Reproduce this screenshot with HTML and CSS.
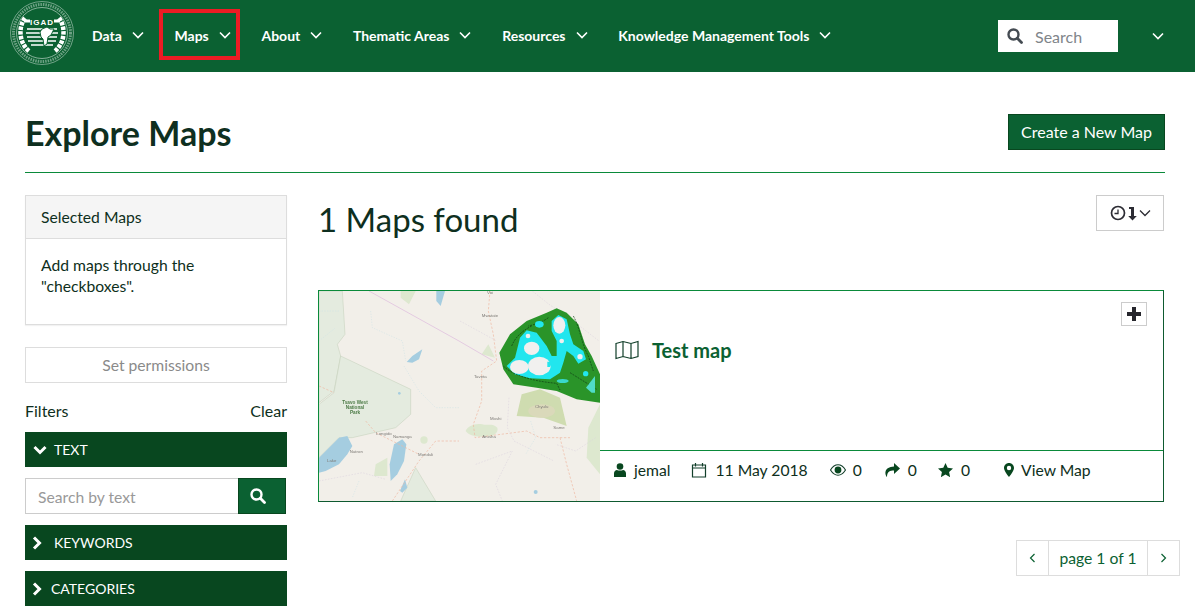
FILE: index.html
```html
<!DOCTYPE html>
<html lang="en">
<head>
    <meta charset="UTF-8">
    <meta name="viewport" content="width=device-width, initial-scale=1.0">
    <title>Explore Maps</title>
    <link rel="stylesheet" href="styles.css">
</head>
<body>
    <header class="topbar">
        <a class="logo" href="#">
            <svg width="64" height="64" viewBox="0 0 64 64" fill="none" stroke="#e6efe9">
                <circle cx="32" cy="32" r="31.500" stroke-width=".8" opacity=".6"/>
                <circle cx="32" cy="32" r="28.500" stroke-width="3" stroke-dasharray="1.500 1" opacity=".45"/>
                <circle cx="32" cy="32" r="25.500" stroke-width=".8" opacity=".7"/>
                <path d="M15 17C8 26 9 42 19 50M49 17c7 9 6 25-4 33" stroke="#fff" stroke-width="4.500" stroke-dasharray="3.500 1.200"/>
                <path d="M17 28h30M16 32h32M17 36h30M18 40h28M21 44h22" stroke="#fff" stroke-width="1.300"/>
                <path d="M14 20h6M44 20h6" stroke="#fff" stroke-width="3"/>
                <path d="M32 28l5-2 3 2h4l-3 6-3 2-1 7-3 2-1-7-2-2-1-5z" fill="#fff" stroke="#0b6132" stroke-width="1"/>
                <text class="logo-text" x="32" y="23.500" text-anchor="middle">IGAD</text>
            </svg>
        </a>
        <nav class="mainnav">
            <a class="navitem" href="#">Data <svg class="caret" viewBox="0 0 12 8"><path d="M1 1.500l5 5 5-5"/></svg></a>
            <a class="navitem navitem-marked" href="#">Maps <svg class="caret" viewBox="0 0 12 8"><path d="M1 1.500l5 5 5-5"/></svg></a>
            <a class="navitem" href="#">About <svg class="caret" viewBox="0 0 12 8"><path d="M1 1.500l5 5 5-5"/></svg></a>
            <a class="navitem" href="#">Thematic Areas <svg class="caret" viewBox="0 0 12 8"><path d="M1 1.500l5 5 5-5"/></svg></a>
            <a class="navitem" href="#">Resources <svg class="caret" viewBox="0 0 12 8"><path d="M1 1.500l5 5 5-5"/></svg></a>
            <a class="navitem" href="#">Knowledge Management Tools <svg class="caret" viewBox="0 0 12 8"><path d="M1 1.500l5 5 5-5"/></svg></a>
        </nav>
        <div class="topsearch">
            <svg class="searchicon" width="16" height="16" viewBox="0 0 16 16"><circle cx="6.500" cy="6.500" r="5" fill="none" stroke="currentColor" stroke-width="2.400"/><path d="M10.300 10.300l4.200 4.200" stroke="currentColor" stroke-width="2.800" stroke-linecap="round"/></svg>
            <span>Search</span>
        </div>
        <svg class="caret caret-last" viewBox="0 0 12 8"><path d="M1 1.500l5 5 5-5"/></svg>
    </header>

    <main class="page">
        <div class="titlerow">
            <h1>Explore Maps</h1>
            <a class="btn-create" href="#">Create a New Map</a>
        </div>

        <div class="columns">
            <aside class="sidebar">
                <div class="panel">
                    <div class="panel-head">Selected Maps</div>
                    <div class="panel-body">Add maps through the "checkboxes".</div>
                </div>
                <button class="btn-perm" type="button">Set permissions</button>
                <div class="filters-row">
                    <span>Filters</span>
                    <a href="#">Clear</a>
                </div>
                <div class="filterbar filterbar-text">
                    <svg class="fchev" width="14" height="10" viewBox="0 0 14 10"><path d="M1.500 2l5.500 5.500L12.500 2"/></svg>
                    TEXT
                </div>
                <div class="textsearch">
                    <div class="textsearch-input">Search by text</div>
                    <div class="textsearch-btn">
                        <svg width="16" height="16" viewBox="0 0 16 16"><circle cx="6.500" cy="6.500" r="5" fill="none" stroke="#fff" stroke-width="2.400"/><path d="M10.300 10.300l4.200 4.200" stroke="#fff" stroke-width="2.800" stroke-linecap="round"/></svg>
                    </div>
                </div>
                <div class="filterbar filterbar-kw">
                    <svg class="fchev" width="10" height="14" viewBox="0 0 10 14"><path d="M2 1.500L7.500 7 2 12.500"/></svg>
                    KEYWORDS
                </div>
                <div class="filterbar filterbar-cat">
                    <svg class="fchev" width="10" height="14" viewBox="0 0 10 14"><path d="M2 1.500L7.500 7 2 12.500"/></svg>
                    CATEGORIES
                </div>
            </aside>

            <section class="results">
                <div class="results-head">
                    <h2>1 Maps found</h2>
                    <button class="btn-sort" type="button">
                        <svg width="16" height="16" viewBox="0 0 16 16" fill="none" stroke="#2c2c34"><circle cx="8" cy="8" r="6.500" stroke-width="1.700"/><path d="M8 4.500V8.500H4.500" stroke-width="1.300"/></svg>
                        <svg width="9" height="15" viewBox="0 0 9 15"><path d="M1 1h5v9h2.800L4.500 14.500 .2 10H3V3H1z" fill="#2c2c34"/></svg>
                        <svg width="12" height="8" viewBox="0 0 12 8" fill="none" stroke="#2c2c34" stroke-width="1.300"><path d="M1 1.500l5 5 5-5"/></svg>
                    </button>
                </div>

                <article class="card">
                    <svg class="thumb" width="281" height="210" viewBox="0 0 843 630">
                        <g class="thumb-tiles">
                            <rect width="843" height="630" fill="#f2efe9"/>
                            <g fill="#e4ebdf" stroke="#c3cfb8" stroke-width="1.500">
                                <path d="M0 0h70l8 130-23 30 10 35-20 105-45 35z"/>
                                <path d="M65 195l210 100v75l-45 40-65 15-65 15H60L0 500V340l45-35z"/>
                                <path d="M245 630l45-100 60 100z"/>
                            </g>
                            <g fill="#dde8cf">
                                <path d="M245 0h45l-20 40-25-20zM165 555l5-35 35-20v55z"/>
                                <ellipse cx="315" cy="447" rx="11" ry="11"/>
                                <path d="M488 190l20-30 20 40zM440 420c5-15 30-25 50-20 15 5 30-5 45 10 5 15-15 30-35 25-20 5-50 0-60-15z"/>
                                <path d="M803 500l5-90 35-70v210z"/>
                            </g>
                            <path d="M593 375l15-65 55-15 60 25 20 85-70-25z" fill="#cfdcb0"/>
                            <ellipse cx="668" cy="360" rx="40" ry="20" fill="#dad9ba"/>
                            <g fill="#a5cde0">
                                <path d="M0 545v-45l60-60 25-5 15 30-15 25-25 30-40 20z"/>
                                <path d="M215 570l-3-50 13-60 25-15 12 15-7 50-20 40z"/>
                                <path d="M263 213l17-18 30-20-10 30-20 10z"/>
                                <path d="M352 0h26l-13 45-13-15z"/>
                                <path d="M243 600l15-35 7 25-15 15z"/>
                                <circle cx="650" cy="603" r="6"/>
                                <circle cx="241" cy="307" r="4"/>
                            </g>
                            <path d="M150 0l270 150 103 60" stroke="#dcb8dc" stroke-width="2" fill="none"/>
                            <g fill="none" stroke="#eeb6a0" stroke-width="2" stroke-dasharray="7 5">
                                <path d="M513 0l-5 60 15 70 10 80-45 30v90l-25 70 5 40 155-20 40 20h90"/>
                                <path d="M723 440l20 80 30 110M220 630l80-120 50-60h70"/>
                                <path d="M0 285l45 20M140 390l30 35 130 65"/>
                            </g>
                            <g fill="none" stroke="#d8cfdc" stroke-width="1.500" stroke-dasharray="5 4">
                                <path d="M570 320l-5 90 20 40 60 30 60 30M470 520l110-40-50 100 20 50M0 570l130-25 70 20M830 440l-60 40-60-20"/>
                                <path d="M423 90l110 60M640 0l50 40 60 40 90 70"/>
                            </g>
                            <g fill="none" stroke="#cbe0e4" stroke-width="1.500" stroke-dasharray="4 4">
                                <path d="M0 60h60M0 150l50-40M155 60l5 50 90 40 10 60M255 225l45 75 50 50 70 0M120 570l-20 50M635 390l15 50-30 50"/>
                            </g>
                            <g class="maplabel-park">
                                <text x="108" y="340" text-anchor="middle">Tsavo West</text>
                                <text x="108" y="354" text-anchor="middle">National</text>
                                <text x="108" y="368" text-anchor="middle">Park</text>
                            </g>
                            <g class="maplabel">
                                <text x="513" y="10" text-anchor="middle">Voi</text>
                                <text x="513" y="78" text-anchor="middle">Mwatate</text>
                                <text x="484" y="260" text-anchor="middle">Taveta</text>
                                <text x="530" y="388" text-anchor="middle">Moshi</text>
                                <text x="510" y="440" text-anchor="middle">Arusha</text>
                                <text x="668" y="352" text-anchor="middle">Chyulu</text>
                                <text x="720" y="415" text-anchor="middle">Same</text>
                                <text x="195" y="432" text-anchor="middle">Longido</text>
                                <text x="250" y="442" text-anchor="middle">Namanga</text>
                                <text x="320" y="494" text-anchor="middle">Monduli</text>
                                <text x="112" y="486" text-anchor="middle">Natron</text>
                                <text x="38" y="512" text-anchor="middle">Lake</text>
                            </g>
                        </g>
                        <g class="thumb-layer" transform="translate(423 0)">
                            <path d="M118 185L150 130 200 90 260 65 290 52 320 65 355 100 375 160 395 195 420 250V335L350 325 290 300 230 290 160 280 130 235Z" fill="#2a9429"/>
                            <path d="M140 225L165 200 180 140 200 118 230 125 260 165 275 195 290 195 290 150 275 120 275 90 295 72 320 85 330 130 340 160 370 180 378 205 355 218 340 195 320 180 310 215 300 245 270 265 210 262 165 250Z" fill="#22e6ee"/>
                            <path d="M130 225c25 25 80 45 160 52l10 20M155 165c10-25 30-45 60-60M265 80c-20 15-40 20-60 25M340 75c20 35 25 85 45 120l15 45M330 245l80 50" stroke="#0d3a14" stroke-width="2" stroke-dasharray="6 3" fill="none"/>
                            <path d="M378 290l27-35v50h-10z" fill="#4fdcc8"/>
                            <ellipse cx="238" cy="100" rx="13" ry="10" fill="#22e6ee"/>
                            <circle cx="377" cy="248" r="8" fill="#22e6ee"/>
                            <ellipse cx="308" cy="270" rx="18" ry="6" fill="#3ad8cc"/>
                            <g fill="#f1f0ef">
                                <ellipse cx="298" cy="103" rx="18" ry="25"/>
                                <ellipse cx="215" cy="172" rx="23" ry="20"/>
                                <ellipse cx="178" cy="228" rx="28" ry="21"/>
                                <ellipse cx="238" cy="225" rx="34" ry="28"/>
                                <circle cx="305" cy="150" r="7"/>
                                <circle cx="360" cy="197" r="8"/>
                                <circle cx="204" cy="135" r="7"/>
                            </g>
                            <path d="M262 212h16l-8 16h-8z" fill="#22e6ee"/>
                        </g>
                    </svg>
                    <div class="card-main">
                        <div class="card-body">
                            <button class="btn-add" type="button" aria-label="Add">
                                <svg width="16" height="16" viewBox="0 0 16 16"><path d="M6 1h4v5h5v4h-5v5H6v-5H1V6h5z" fill="#26262c"/></svg>
                            </button>
                            <h3>
                                <svg width="24" height="20" viewBox="0 0 24 20" fill="none" stroke="#123f2a" stroke-width="1.200"><path d="M1 3.500l7-2 8 2 7-2v15l-7 2-8-2-7 2zM8 1.500v15M16 3.500v15"/></svg>
                                <a href="#">Test map</a>
                            </h3>
                        </div>
                        <div class="card-foot">
                            <span class="meta meta-user">
                                <svg class="solid" width="12" height="14" viewBox="0 0 12 14"><circle cx="6" cy="3.500" r="3.300"/><path d="M0 14v-3.500C0 8.500 1.500 7 3 7c1 .8 5 .8 6 0 1.500 0 3 1.500 3 3.500V14z"/></svg>
                                jemal
                            </span>
                            <span class="meta meta-date">
                                <svg width="16" height="16" viewBox="0 0 16 16" fill="none" stroke="#123f2a" stroke-width="1.200"><path d="M1.500 3h13v12h-13zM1.500 6h13M4.500 1v3.500M11.500 1v3.500"/></svg>
                                11 May 2018
                            </span>
                            <span class="meta meta-views">
                                <svg width="16" height="12" viewBox="0 0 16 12"><path d="M.5 6C3 2 5.500 .8 8 .8S13 2 15.500 6C13 10 10.500 11.200 8 11.200S3 10 .5 6z" fill="none" stroke="#123f2a" stroke-width="1.100"/><circle cx="8" cy="6" r="3.400" fill="#08471f"/></svg>
                                0
                            </span>
                            <span class="meta meta-share">
                                <svg class="solid" width="16" height="14" viewBox="0 0 16 14"><path d="M10 0l6 5.500-6 5.500V7.500C6 7.500 3 8.500 3 14 .5 11 0 4 10 3.500z"/></svg>
                                0
                            </span>
                            <span class="meta meta-star">
                                <svg class="solid" width="15" height="14" viewBox="0 0 15 14"><path d="M7.500 0l2.200 4.800 5.300.6-3.900 3.600 1 5.200-4.600-2.600-4.600 2.600 1-5.200L0 5.400l5.300-.6z"/></svg>
                                0
                            </span>
                            <a class="meta meta-view" href="#">
                                <svg class="solid" width="10" height="14" viewBox="0 0 10 14"><path fill-rule="evenodd" d="M5 0c2.800 0 5 2.200 5 5 0 2.500-3 6.500-5 9-2-2.500-5-6.500-5-9 0-2.800 2.200-5 5-5zm0 2.800a2.200 2.200 0 100 4.400 2.200 2.200 0 000-4.400z"/></svg>
                                View Map
                            </a>
                        </div>
                    </div>
                </article>

                <div class="pager">
                    <a href="#"><svg width="7" height="10" viewBox="0 0 7 10" fill="none" stroke="#0b6132" stroke-width="1.200"><path d="M5.500 1L1.500 5l4 4"/></svg></a>
                    <span>page 1 of 1</span>
                    <a href="#"><svg width="7" height="10" viewBox="0 0 7 10" fill="none" stroke="#0b6132" stroke-width="1.200"><path d="M1.500 1l4 4-4 4"/></svg></a>
                </div>
            </section>
        </div>
    </main>
</body>
</html>
```

FILE: styles.css
```css
html, body {
    height: 100%;
    overflow: hidden;
}
body {
    margin: 0;
    font-family: Lato, "Open Sans", sans-serif;
    font-size: 16px;
    color: #0e2f20;
    background-color: #fff;
}
a {
    color: inherit;
    text-decoration: none;
}
button {
    font-family: inherit;
}

/* top bar */
.topbar {
    display: flex;
    align-items: center;
    height: 72px;
    background-color: #0b6132;
    color: #fff;
}
.logo {
    display: flex;
    margin: -6px 0 0 10px;
}
.logo-text {
    font-family: "Liberation Sans", sans-serif;
    font-size: 8px;
    font-weight: bold;
    letter-spacing: 1px;
    fill: #fff;
    stroke: none;
}
.mainnav {
    display: flex;
    align-items: center;
    margin: -2px 0 0 18px;
}
.navitem {
    position: relative;
    display: flex;
    align-items: center;
    gap: 10px;
    margin-right: 30.700px;
    font-size: 14px;
    font-weight: 700;
}
.navitem-marked::after {
    content: "";
    position: absolute;
    left: -15px;
    top: -18px;
    width: 73px;
    height: 43px;
    border: 4px solid #ed1c24;
}
.caret {
    width: 12px;
    height: 8px;
    fill: none;
    stroke: #fff;
    stroke-width: 1.600;
}
.topsearch {
    display: flex;
    align-items: center;
    gap: 12px;
    width: 120px;
    height: 32px;
    box-sizing: border-box;
    padding-left: 9px;
    margin-left: auto;
    background-color: #fff;
    color: #444b52;
    font-size: 16px;
}
.topsearch span {
    color: #80858a;
}
.caret-last {
    margin: 0 31px 0 34px;
}

/* page */
.page {
    padding: 0 30px 0 25px;
}
.titlerow {
    display: flex;
    align-items: center;
    justify-content: space-between;
    height: 100px;
    border-bottom: 1px solid #0a8a3a;
}
h1 {
    margin: 20px 0 0;
    font-size: 34px;
    font-weight: 700;
}
.btn-create {
    padding: 7px 12px 8px;
    margin-top: 20px;
    background-color: #0b6132;
    border: 1px solid #08471f;
    color: #fff;
    font-size: 16px;
    line-height: 19px;
}
.columns {
    display: flex;
    gap: 31px;
    padding-top: 22px;
}

/* sidebar */
.sidebar {
    flex: 0 0 262px;
    font-size: 15.700px;
}
.panel {
    height: 130px;
    box-sizing: border-box;
    border: 1px solid #ddd;
    box-shadow: 0 1px 1px rgba(0, 0, 0, 0.05);
}
.panel-head {
    height: 43px;
    box-sizing: border-box;
    padding: 12px 15px;
    background-color: #f5f5f5;
    border-bottom: 1px solid #ddd;
    line-height: 18px;
}
.panel-body {
    padding: 16px 15px;
    line-height: 21px;
}
.btn-perm {
    display: block;
    width: 100%;
    height: 36px;
    margin-top: 22px;
    background-color: #fff;
    border: 1px solid #ddd;
    color: #8a8a8a;
    font-size: 15.700px;
}
.filters-row {
    display: flex;
    justify-content: space-between;
    margin-top: 18px;
    font-size: 16px;
    line-height: 19px;
}
.filterbar {
    display: flex;
    align-items: center;
    height: 35px;
    margin-top: 11px;
    background-color: #08471f;
    color: #fff;
    font-size: 14px;
}
.fchev {
    fill: none;
    stroke: #fff;
    stroke-width: 3;
}
.filterbar-text {
    margin-top: 12px;
    gap: 7px;
    padding-left: 8px;
}
.filterbar-kw {
    gap: 12px;
    padding-left: 7px;
}
.filterbar-cat {
    gap: 9px;
    padding-left: 7px;
}
.textsearch {
    display: flex;
    height: 36px;
    margin: 11px 1px 0 0;
}
.textsearch-input {
    flex: 1;
    box-sizing: border-box;
    padding: 0 12px;
    border: 1px solid #ccc;
    border-right: 0;
    color: #999;
    line-height: 36px;
}
.textsearch-btn {
    display: flex;
    align-items: center;
    justify-content: center;
    width: 48px;
    box-sizing: border-box;
    padding-right: 8px;
    background-color: #0b6132;
    border: 1px solid #08471f;
}

/* results */
.results {
    flex: 1;
    min-width: 0;
}
.results-head {
    display: flex;
    align-items: flex-start;
    justify-content: space-between;
    height: 95px;
    margin-right: 1px;
}
h2 {
    margin: 3px 0 0;
    font-size: 33px;
    font-weight: 400;
    line-height: 42px;
}
.btn-sort {
    display: flex;
    align-items: center;
    justify-content: center;
    gap: 2px;
    width: 68px;
    height: 36px;
    padding: 0;
    background-color: #fff;
    border: 1px solid #ccc;
}
.card {
    display: flex;
    height: 212px;
    box-sizing: border-box;
    margin-right: 1px;
    border: 1px solid #0a8a3a;
    border-right-color: #0e5a30;
    border-bottom-color: #0e5a30;
}
.thumb {
    flex: none;
}
.thumb-tiles, .thumb-layer {
    filter: blur(0.4px);
}
.maplabel {
    font-family: "Liberation Sans", sans-serif;
    font-size: 13px;
    fill: #7d7a76;
}
.maplabel-park {
    font-family: "Liberation Sans", sans-serif;
    font-size: 14px;
    font-weight: bold;
    fill: #4c7a46;
}
.card-main {
    display: flex;
    flex: 1;
    flex-direction: column;
}
.card-body {
    position: relative;
    flex: 1;
}
.card-body h3 {
    display: flex;
    align-items: center;
    gap: 13px;
    margin: 46px 0 0 15px;
    font-size: 20px;
    font-weight: 700;
    line-height: 26px;
}
.card-body h3 a {
    color: #0b6132;
}
.btn-add {
    position: absolute;
    top: 11px;
    right: 16px;
    display: flex;
    align-items: center;
    justify-content: center;
    width: 26px;
    height: 24px;
    padding: 0;
    background-color: #fff;
    border: 1px solid #ccc;
}
.card-foot {
    display: flex;
    align-items: center;
    height: 37px;
    padding-left: 14px;
    margin-bottom: 13px;
    border-top: 1px solid #0a8a3a;
    font-size: 15.700px;
}
.meta {
    display: flex;
    align-items: center;
}
.meta .solid {
    fill: #08471f;
}
.meta-user {
    gap: 8px;
}
.meta-date {
    gap: 8px;
    margin-left: 21px;
}
.meta-views {
    gap: 7px;
    margin-left: 22px;
}
.meta-share {
    gap: 8px;
    margin-left: 22px;
}
.meta-star {
    gap: 8px;
    margin-left: 21px;
}
.meta-view {
    gap: 7px;
    margin-left: 34px;
}
.pager {
    display: flex;
    justify-content: flex-end;
    height: 36px;
    margin: 38px -15px 0 0;
    color: #0b6132;
    font-size: 15.700px;
}
.pager a, .pager span {
    display: flex;
    align-items: center;
    justify-content: center;
    box-sizing: border-box;
    border: 1px solid #ddd;
}
.pager a {
    width: 33px;
}
.pager span {
    width: 100px;
    margin: 0 -1px;
}
```
